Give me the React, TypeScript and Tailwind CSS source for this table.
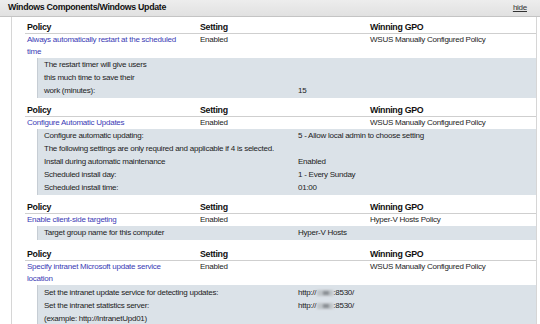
import React from "react";

const Redact = () => (
  <span className="inline-block align-middle w-[16px] h-[6px] mx-[0.5px] bg-[#bfc4c8] blur-[1px] relative">
    <span className="absolute left-[6px] top-[1px] w-[6px] h-[4px] bg-[#8a8f94]" />
  </span>
);

const HeaderRow = () => (
  <div className="grid grid-cols-[173px_170px_1fr] h-[13px] items-center border-b border-[#cfcfcf] font-bold text-[8.8px] tracking-[-0.3px] text-[#111]">
    <div className="pl-[2px]">Policy</div>
    <div className="pl-[2px]">Setting</div>
    <div className="pl-[2px]">Winning GPO</div>
  </div>
);

const PolicyRow = ({ name, setting, gpo }: { name: React.ReactNode; setting: string; gpo: string }) => (
  <div className="grid grid-cols-[173px_170px_1fr] leading-[12px]">
    <div className="pl-[2px] text-[#3b3bb5]">{name}</div>
    <div className="pl-[2px]">{setting}</div>
    <div className="pl-[2px]">{gpo}</div>
  </div>
);

const Detail = ({ rows, padTop = 0 }: { rows: [React.ReactNode, React.ReactNode][]; padTop?: number }) => (
  <div className="ml-[12px] bg-[#dbe2e8] border-l border-[#c6cdd4] pb-[1px]">
    <div className={padTop ? "pt-[1px]" : ""}>
      {rows.map((r, i) => (
        <div key={i} className="grid grid-cols-[254px_1fr] leading-[13px] pl-[6px]">
          <div>{r[0]}</div>
          <div className="self-end">{r[1]}</div>
        </div>
      ))}
    </div>
  </div>
);

export default function App() {
  return (
    <div className="w-[540px] h-[324px] overflow-hidden bg-white text-[8px] tracking-[-0.25px] text-[#1c1c1c] font-['Liberation_Sans',Arial,sans-serif]">
      <div className="h-[17px] flex items-center justify-between pl-[8px] pr-[13px] bg-gradient-to-b from-[#ededed] to-[#e1e1e1] border-b border-[#c4c4c4]">
        <span className="font-bold text-[8.8px] tracking-[-0.3px] text-[#111]">Windows Components/Windows Update</span>
        <span className="underline text-[#333]">hide</span>
      </div>
      <div className="ml-[11px] mr-[3px] border-l border-r border-[#d6d6d6] pl-[13px] h-[307px]">
        <div className="pt-[4px]">
          <HeaderRow />
          <PolicyRow
            name={<>Always automatically restart at the scheduled<br />time</>}
            setting="Enabled"
            gpo="WSUS Manually Configured Policy"
          />
          <Detail
            rows={[
              [<>The restart timer will give users<br />this much time to save their<br />work (minutes):</>, "15"],
            ]}
          />
        </div>
        <div className="pt-[6px]">
          <HeaderRow />
          <PolicyRow name="Configure Automatic Updates" setting="Enabled" gpo="WSUS Manually Configured Policy" />
          <Detail
            rows={[
              ["Configure automatic updating:", "5 - Allow local admin to choose setting"],
              ["The following settings are only required and applicable if 4 is selected.", ""],
              ["Install during automatic maintenance", "Enabled"],
              ["Scheduled install day:", "1 - Every Sunday"],
              ["Scheduled install time:", "01:00"],
            ]}
          />
        </div>
        <div className="pt-[6px]">
          <HeaderRow />
          <PolicyRow name="Enable client-side targeting" setting="Enabled" gpo="Hyper-V Hosts Policy" />
          <Detail rows={[["Target group name for this computer", "Hyper-V Hosts"]]} />
        </div>
        <div className="pt-[8px]">
          <HeaderRow />
          <PolicyRow
            name={<>Specify intranet Microsoft update service<br />location</>}
            setting="Enabled"
            gpo="WSUS Manually Configured Policy"
          />
          <Detail
            padTop={1}
            rows={[
              ["Set the intranet update service for detecting updates:", <>http://<Redact />:8530/</>],
              ["Set the intranet statistics server:", <>http://<Redact />:8530/</>],
              ["(example: http://IntranetUpd01)", ""],
            ]}
          />
        </div>
      </div>
    </div>
  );
}
